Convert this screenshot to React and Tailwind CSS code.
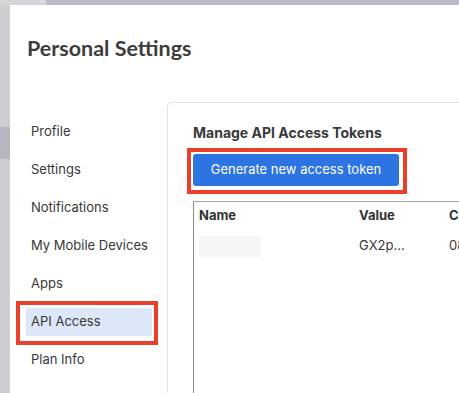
const navItems = ['Profile', 'Settings', 'Notifications', 'My Mobile Devices', 'Apps', 'API Access', 'Plan Info'];

const App = () => (
  <div className="w-[459px] h-[393px] overflow-hidden flex flex-col bg-[#cfcfd4]" style={{ fontFamily: 'Inter, "Liberation Sans", sans-serif' }}>
    {/* backdrop strip */}
    <div className="h-[5px] flex shrink-0">
      <div className="w-[47px] bg-[#d6d6da] border-r border-[#bdbdc4]"></div>
      <div className="flex-1 bg-[#bbbaca]"></div>
    </div>

    <div className="flex flex-1 min-h-0">
      <div className="w-[10px] flex flex-col shrink-0">
        <div className="h-[122px] bg-[#cdcdd2]"></div>
        <div className="h-[32px] bg-[#b6b6c0]"></div>
        <div className="flex-1 bg-[#cdcdd2]"></div>
      </div>

      {/* modal */}
      <div className="flex-1 min-w-0 bg-white flex flex-col">
        <h1 className="shrink-0 pl-[17px] pt-[27px] h-[97px] text-[21.5px] font-bold text-[#3c3c3c]" style={{ fontFamily: 'Lato, "Liberation Sans", sans-serif' }}>
          Personal Settings
        </h1>

        <div className="flex flex-1 min-h-0 overflow-hidden">
          {/* nav */}
          <nav className="w-[157px] shrink-0 pt-[16px] pl-[16px] pr-[15px]">
            {navItems.map((item) => (
              <div key={item} className="relative h-[28px] mb-[10px]">
                <div className={`h-full flex items-center pl-[5px] text-[13px] text-[#383838] ${item === 'API Access' ? 'bg-[#dce8f7]' : ''}`}>
                  {item}
                </div>
                {item === 'API Access' && (
                  <span className="absolute left-[-10px] right-[-6px] top-[-7px] bottom-[-9px] border-[4px] border-[#e8402a]"></span>
                )}
              </div>
            ))}
          </nav>

          {/* card */}
          <div className="flex-1 min-w-0 border-l border-t border-[#e3e3e3] rounded-tl-[5px] pl-[25px] pt-[21px]">
            <h2 className="text-[14px] font-bold text-[#3a3a3a] leading-[17px]">Manage API Access Tokens</h2>
            <div className="relative mt-[13px] w-[206px]">
              <button className="w-full h-[32px] bg-[#2b74e2] text-white text-[13px] rounded-[3px]">
                Generate new access token
              </button>
              <span className="absolute left-[-6px] right-[-8px] top-[-6px] bottom-[-8px] border-[4px] border-[#e8402a]"></span>
            </div>

            <div className="mt-[15px] h-[300px] border-l border-t border-l-[#8e8e8e] border-t-[#a3a3a3] w-[300px]">
              <div className="flex h-[28px] items-center text-[13px] font-bold text-[#333]">
                <div className="w-[165px] shrink-0 pl-[5px]">Name</div>
                <div className="w-[90px] shrink-0">Value</div>
                <div className="whitespace-nowrap">C</div>
              </div>
              <div className="flex h-[32px] items-center text-[13px] text-[#3a3a3a]">
                <div className="w-[165px] shrink-0 pl-[5px]">
                  <div className="w-[62px] h-[21px] bg-[#f6f6f6]"></div>
                </div>
                <div className="w-[90px] shrink-0">GX2p...</div>
                <div className="whitespace-nowrap">08</div>
              </div>
            </div>
          </div>
        </div>
      </div>
    </div>
  </div>
);

export default App;
